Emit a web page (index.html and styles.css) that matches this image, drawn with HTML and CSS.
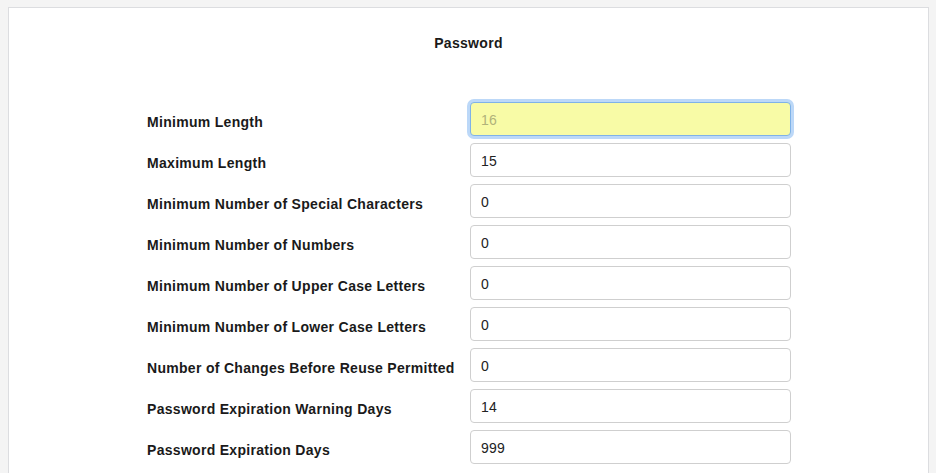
FILE: index.html
```html
<!DOCTYPE html>
<html>
<head>
<meta charset="utf-8">
<link rel="stylesheet" href="styles.css">
</head>
<body>
<div class="card">
  <h2 class="title">Password</h2>
  <form class="form">
    <label class="label">Minimum Length</label>
    <input class="field field-focus" type="text" value="16">
    <label class="label">Maximum Length</label>
    <input class="field" type="text" value="15">
    <label class="label">Minimum Number of Special Characters</label>
    <input class="field" type="text" value="0">
    <label class="label">Minimum Number of Numbers</label>
    <input class="field" type="text" value="0">
    <label class="label">Minimum Number of Upper Case Letters</label>
    <input class="field" type="text" value="0">
    <label class="label">Minimum Number of Lower Case Letters</label>
    <input class="field" type="text" value="0">
    <label class="label">Number of Changes Before Reuse Permitted</label>
    <input class="field" type="text" value="0">
    <label class="label">Password Expiration Warning Days</label>
    <input class="field" type="text" value="14">
    <label class="label">Password Expiration Days</label>
    <input class="field" type="text" value="999">
  </form>
</div>
</body>
</html>
```

FILE: styles.css
```css
html, body {
  margin: 0;
  padding: 0;
  background: #f4f4f4;
  height: 473px;
  overflow: hidden;
}
body {
  padding: 7px 7px 0 8px;
  font-family: "Liberation Sans", Arial, sans-serif;
  font-size: 14px;
  color: #222;
}
.card {
  background: #fff;
  border: 1px solid #dcdde0;
  padding: 25px 0 60px 0;
  width: 919px;
}
.title {
  margin: 0;
  text-align: center;
  font-size: 14px;
  font-weight: bold;
  line-height: 20px;
  letter-spacing: 0.3px;
  color: #1a1a1a;
}
.form {
  margin: 49px 0 0 138px;
  display: grid;
  grid-template-columns: 323px 321px;
  row-gap: 7px;
}
.label {
  font-weight: bold;
  line-height: 20px;
  padding-top: 10px;
  letter-spacing: 0.3px;
  color: #1a1a1a;
  white-space: nowrap;
}
.field {
  box-sizing: border-box;
  height: 34px;
  width: 321px;
  margin: 0;
  padding: 1px 10px 0 10px;
  border: 1px solid #cfcfcf;
  border-radius: 4px;
  background: #fff;
  font-family: "Liberation Sans", Arial, sans-serif;
  font-size: 14px;
  letter-spacing: 0.2px;
  color: #222;
  outline: none;
}
.field-focus {
  background: #f8fba6;
  color: #b0b27a;
  border-color: #7fb2e8;
  box-shadow: 0 0 0 3px #bcd8f8;
}
```
